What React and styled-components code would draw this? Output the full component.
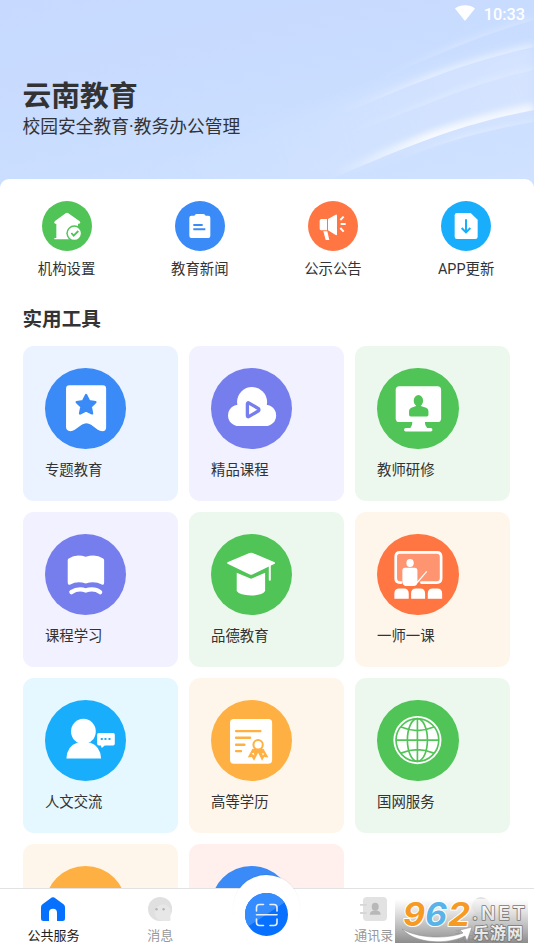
import React from 'react'
import styled, { createGlobalStyle } from 'styled-components'

const BLUE = '#3a8af8'
const PURPLE = '#767eee'
const GREEN = '#50c456'
const ORANGE = '#ff7643'
const SKY = '#19aefb'
const AMBER = '#ffb043'

const quickLinks = [
  { text: '机构设置', color: GREEN, icon: <HouseIcon /> },
  { text: '教育新闻', color: BLUE, icon: <ClipboardIcon /> },
  { text: '公示公告', color: ORANGE, icon: <MegaphoneIcon /> },
  { text: 'APP更新', color: SKY, icon: <DownloadIcon /> },
]

const tools = [
  { text: '专题教育', color: BLUE, bg: '#eaf3ff', icon: <BookmarkIcon /> },
  { text: '精品课程', color: PURPLE, bg: '#f1f1ff', icon: <CloudIcon /> },
  { text: '教师研修', color: GREEN, bg: '#ecf8ee', icon: <MonitorIcon /> },
  { text: '课程学习', color: PURPLE, bg: '#f1f1ff', icon: <BookIcon /> },
  { text: '品德教育', color: GREEN, bg: '#ecf8ee', icon: <CapIcon /> },
  { text: '一师一课', color: ORANGE, bg: '#fff6eb', icon: <TeacherIcon /> },
  { text: '人文交流', color: SKY, bg: '#e5f7ff', icon: <PersonIcon /> },
  { text: '高等学历', color: AMBER, bg: '#fff6eb', icon: <DiplomaIcon /> },
  { text: '国网服务', color: GREEN, bg: '#ecf8ee', icon: <GlobeIcon /> },
  { text: '', color: AMBER, bg: '#fff6eb' },
  { text: '', color: BLUE, bg: '#fff0ed' },
]

const streaks = [
  { id: 's1', d: 'M320 183C380 160 440 128 534 110', width: 22, opacity: 0.85, from: 330 },
  { id: 's2', d: 'M380 167C430 146 480 131 534 122', width: 8, opacity: 0.45, from: 400 },
  { id: 's3', d: 'M300 132C400 90 450 66 534 47', width: 10, opacity: 0.55, from: 340 },
  { id: 's4', d: 'M350 134C420 108 470 84 534 70', width: 10, opacity: 0.3, from: 350 },
  { id: 's5', d: 'M370 86C430 56 480 36 534 20', width: 10, opacity: 0.28, from: 380 },
]

function App() {
  return (
    <Screen>
      <GlobalStyle />
      <Header>
        <HeaderWaves />
        <StatusBar>
          <svg width="20" height="16" viewBox="0 0 20 16">
            <path d="M0 3.6C5.6-.8 14.4-.8 20 3.6L10.6 15.200Q10 15.900 9.400 15.200Z" fill="#fff" />
          </svg>
          <Clock>10:33</Clock>
        </StatusBar>
        <Title>云南教育</Title>
        <Subtitle>校园安全教育·教务办公管理</Subtitle>
      </Header>
      <Panel>
        <QuickRow>
          {quickLinks.map(item => (
            <QuickItem key={item.text}>
              <Round $size={50} $color={item.color}>{item.icon}</Round>
              <QuickText>{item.text}</QuickText>
            </QuickItem>
          ))}
        </QuickRow>
        <SectionTitle>实用工具</SectionTitle>
        <ToolGrid>
          {tools.map((item, i) => (
            <ToolCard key={i} $bg={item.bg}>
              <Round $size={81.5} $color={item.color}>{item.icon}</Round>
              <ToolText>{item.text}</ToolText>
            </ToolCard>
          ))}
        </ToolGrid>
      </Panel>
      <TabBar>
        <Tab $active>
          <svg width="24" height="24" viewBox="0 0 24 24">
            <path d="M1.500 7.300 10.700.6q1.300-.9 2.600 0l9.200 6.700Q24 8.500 24 10.300V21.500Q24 24 21.500 24H16V15.800a4 4 0 0 0-8 0V24H2.500Q0 24 0 21.500V10.300Q0 8.500 1.500 7.300Z" fill="#0670ff" />
          </svg>
          公共服务
        </Tab>
        <Tab>
          <svg width="24" height="24" viewBox="0 0 24 24">
            <path d="M12 0a12 12 0 0 1 9.700 19.200l.3 3.600q.1 1.200-1.200 1.200H12A12 12 0 0 1 12 0Z" fill="#e0e0e0" />
            <path d="M15 7.500a8 8 0 0 1 7.300 11l.2 4.500q0 1-1.200 1H15a8 8 0 0 1 0-16.500Z" fill="#e7e7e7" />
            <circle cx="8.500" cy="12.300" r="1.200" fill="#b5b5b5" />
            <circle cx="15.600" cy="12.300" r="1.200" fill="#b5b5b5" />
          </svg>
          消息
        </Tab>
        <ScanTab>
          <ScanBump />
          <ScanButton>
            <svg width="43" height="43" viewBox="0 0 43 43">
              <circle cx="21.500" cy="21.500" r="21.500" fill="#0870ff" />
              <path d="M39.500 9.500A21.500 21.500 0 1 0 3.500 33.300Z" fill="#358cff" />
              <path
                d="M11.500 18V14.500Q11.500 11.500 14.500 11.500H18.500M25 11.500H29Q32 11.500 32 14.500V18M11.500 26V29.500Q11.500 32.500 14.500 32.500H18.500M25 32.500H29Q32 32.500 32 29.500V26M11.500 21.800H32"
                fill="none"
                stroke="#e5f1ff"
                strokeWidth="1.600"
                strokeLinecap="round"
              />
            </svg>
          </ScanButton>
        </ScanTab>
        <Tab>
          <svg width="28" height="24" viewBox="0 0 28 24">
            <rect x="3" width="24" height="24" rx="4" fill="#e2e2e2" />
            <path d="M.5 7.800h5.500M.5 16h5.500" stroke="#d6d6d6" strokeWidth="1.800" strokeLinecap="round" />
            <ellipse cx="15.200" cy="9.800" rx="3.500" ry="4" fill="#b8b8b8" />
            <path d="M9.800 17.800c0-3 2-4.200 5.400-4.200s5.400 1.200 5.400 4.200Z" fill="#b8b8b8" />
          </svg>
          通讯录
        </Tab>
        <Tab>
          <svg width="24" height="24" viewBox="0 0 24 24">
            <circle cx="12" cy="9" r="9" fill="#e2e2e2" />
            <path d="M2 24q0-9 10-9t10 9Z" fill="#d6d6d6" />
          </svg>
          我的服务
        </Tab>
      </TabBar>
      <Watermark />
    </Screen>
  )
}

export default App

/* every streak is a blurred stroke cut off sharply along its lower edge */
function HeaderWaves() {
  return (
    <Waves viewBox="0 0 534 190" preserveAspectRatio="none">
      <defs>
        <linearGradient id="pale" x1="150" y1="170" x2="534" y2="60" gradientUnits="userSpaceOnUse">
          <stop offset="0" stopColor="#d4e6ff" stopOpacity="0" />
          <stop offset="1" stopColor="#dae6ff" stopOpacity=".7" />
        </linearGradient>
        <filter id="softer" x="-10%" y="-20%" width="120%" height="140%"><feGaussianBlur stdDeviation="6" /></filter>
        <filter id="soft" x="-10%" y="-30%" width="120%" height="160%"><feGaussianBlur stdDeviation="3" /></filter>
        <filter id="edge" x="-10%" y="-30%" width="120%" height="160%"><feGaussianBlur stdDeviation=".6" /></filter>
        {streaks.map(s => (
          <React.Fragment key={s.id}>
            <linearGradient id={s.id + 'g'} x1={s.from} y1="0" x2="534" y2="0" gradientUnits="userSpaceOnUse">
              <stop offset="0" stopColor="#fff" stopOpacity="0" />
              <stop offset=".48" stopColor="#fff" stopOpacity={s.opacity} />
              <stop offset="1" stopColor="#fff" stopOpacity={s.opacity * 0.8} />
            </linearGradient>
            <clipPath id={s.id + 'c'}><path d={s.d + 'V-20H200V190Z'} /></clipPath>
          </React.Fragment>
        ))}
      </defs>
      <path d="M120 178C260 145 370 70 534 45V115C450 130 400 160 320 180Z" fill="url(#pale)" filter="url(#softer)" />
      {streaks.map(s => (
        <g key={s.id} filter="url(#edge)">
          <g clipPath={`url(#${s.id}c)`}>
            <path d={s.d} fill="none" stroke={`url(#${s.id}g)`} strokeWidth={s.width * 0.6} filter="url(#soft)" />
          </g>
        </g>
      ))}
    </Waves>
  )
}

/* small icons, 150 unit box */

function HouseIcon() {
  return (
    <svg viewBox="0 0 150 150" fill="#fff">
      <path d="M71 37q4-3 8 0l33 23q6 5 0 8h-4v47H37v-4h6V68h-4q-5-3 0-8Z" />
      <circle cx="97" cy="97" r="24" fill={GREEN} />
      <circle cx="97" cy="97" r="19.500" />
      <path d="m88 96 7 8 14-14" fill="none" stroke={GREEN} strokeWidth="5.500" />
    </svg>
  )
}

function ClipboardIcon() {
  return (
    <svg viewBox="0 0 150 150" fill="#fff">
      <path d="M49 44h9q2-5 7-5h20q5 0 7 5h8q6 0 6 6v55q0 6-6 6H49q-6 0-6-6V50q0-6 6-6Z" />
      <path d="M55 72h28M55 84.500h36" stroke={BLUE} strokeWidth="6" />
    </svg>
  )
}

function MegaphoneIcon() {
  return (
    <svg viewBox="0 0 150 150" fill="#fff">
      <path d="M40 54h17v34H40q-5 0-5-5V59q0-5 5-5ZM60 54l23-13q4-2 4 3v56q0 4-4 2L60 88ZM46 91h12l6 26H53Z" />
      <path d="m97 57 10-10M98 69h15M97 81l10 11" stroke="#fff" strokeWidth="6" />
    </svg>
  )
}

function DownloadIcon() {
  return (
    <svg viewBox="0 0 150 150" fill="#fff">
      <path d="M48 36h41l21 20v51q0 7-7 7H48q-7 0-7-7V43q0-7 7-7Z" />
      <path d="M75 55v38M62 81l13 13 13-13" fill="none" stroke={SKY} strokeWidth="6" />
    </svg>
  )
}

/* card icons, 244 unit box */

function BookmarkIcon() {
  return (
    <svg viewBox="0 0 244 244" fill="#fff">
      <path d="M73 52h100q10 0 10 10v116q0 11-11 11-8 0-14-4l-20-15q-14-9-28 0l-21 15q-6 4-13 4-13 0-13-12V62q0-10 10-10Z" />
      <path d="m123 81 9 18 19 3-14 14 4 20-18-9-18 9 4-20-14-14 19-3Z" fill={BLUE} stroke={BLUE} strokeWidth="7" strokeLinejoin="round" />
    </svg>
  )
}

function CloudIcon() {
  return (
    <svg viewBox="0 0 244 244" fill="#fff">
      <circle cx="123" cy="102" r="45" />
      <path d="M83 110h80a32 32 0 0 1 0 64H83a32 32 0 0 1 0-64Z" />
      <path d="M109 108v34q0 6 5 3l27-16q5-4 0-8l-27-16q-5-3-5 3Z" fill="none" stroke={PURPLE} strokeWidth="10" strokeLinejoin="round" />
    </svg>
  )
}

function MonitorIcon() {
  return (
    <svg viewBox="0 0 244 244" fill="#fff">
      <rect x="56" y="55" width="136" height="107" rx="11" />
      <path d="M106 160h37q0 11 7 20h11q5 0 5 5t-5 5H86q-5 0-5-5t5-5h14q6-9 6-20Z" />
      <ellipse cx="124" cy="98" rx="14" ry="17" fill={GREEN} />
      <path d="M117 108h14v6l16 5q7 3 7 10v11q0 5-5 5h-48q-5 0-5-5v-11q0-7 7-10l14-5Z" fill={GREEN} />
    </svg>
  )
}

function BookIcon() {
  return (
    <svg viewBox="0 0 244 244" fill="#fff">
      <path d="M68 79q0-4 3-6 22-15 51-5 30-10 52 5 3 2 3 6v67q0 8-7 5-21-11-48-3-26-8-46 3-8 3-8-5Z" />
      <path d="M79 174q20-13 43-5 26-8 43 5" fill="none" stroke="#fff" strokeWidth="13" strokeLinecap="round" />
    </svg>
  )
}

function CapIcon() {
  return (
    <svg viewBox="0 0 244 244" fill="#fff">
      <path d="M115 57q5-2 10 0l64 27q6 3 0 6l-65 31q-4 2-8 0L51 90q-6-3 0-6Z" />
      <path d="m77 116 43 18 42-18v55q-8 13-42 13t-43-13Z" />
      <path d="M176 91v46" stroke="#fff" strokeWidth="6" strokeLinecap="round" />
    </svg>
  )
}

function TeacherIcon() {
  return (
    <svg viewBox="0 0 244 244" fill="#fff">
      <rect x="56" y="55" width="136" height="90" rx="13" fill="#ff9471" />
      <path d="M72 145.500h-3q-13 0-13-13V68q0-13 13-13h110q13 0 13 13v64.500q0 13-13 13h-46" fill="none" stroke="#fff" strokeWidth="8" strokeLinecap="round" />
      <path d="m118 148 31-36" stroke="#fff" strokeWidth="4" />
      <ellipse cx="99" cy="87" rx="11" ry="12" />
      <path d="M84 101h29q8 0 8 8v35q0 12-12 12H92q-16 0-16-14v-33q0-8 8-8Z" />
      <path d="M52 194v-16q0-15 15-15h13q15 0 15 15v16ZM102 194v-16q0-15 15-15h12q15 0 15 15v16ZM152 194v-16q0-15 15-15h13q15 0 15 15v16Z" />
    </svg>
  )
}

function PersonIcon() {
  return (
    <svg viewBox="0 0 244 244" fill="#fff">
      <ellipse cx="115" cy="94" rx="37" ry="38" />
      <path d="M64 175q2-37 32-47h40q30 10 32 47Z" />
      <path d="M161 99h43q5 0 5 5v26q0 6-5 6h-25l-9 8-3-8h-6q-5 0-5-6v-26q0-5 5-5Z" />
      <path d="M167 114h6v6h-6ZM178 114h6v6h-6ZM190 114h6v6h-6Z" fill={SKY} />
    </svg>
  )
}

function DiplomaIcon() {
  return (
    <svg viewBox="0 0 244 244" fill="#fff">
      <rect x="57" y="57" width="126" height="134" rx="11" />
      <path d="M75 93h73M75 113h42M75 134h25M75 153h15" stroke={AMBER} strokeWidth="7" strokeLinecap="round" />
      <path d="m124 146-14 26 12-1 7 11 12-24 12 24 6-11 13 1-15-26Z" fill={AMBER} />
      <circle cx="141" cy="134" r="14" stroke={AMBER} strokeWidth="6" />
      <path d="m121 160 7-2 2 8ZM153 159l7 2-5 5Z" />
    </svg>
  )
}

function GlobeIcon() {
  return (
    <svg viewBox="0 0 244 244" fill="#fff">
      <circle cx="121" cy="120" r="72" />
      <g fill="none" stroke={GREEN} strokeWidth="5">
        <circle cx="121" cy="120" r="64" />
        <ellipse cx="121" cy="120" rx="30" ry="64" />
        <path d="M121 56v128M57 120h128M72 81q49 21 98 0M72 159q49-21 98 0" />
      </g>
    </svg>
  )
}

function Watermark() {
  return (
    <Mark width="133" height="44" viewBox="0 0 133 44">
      <defs>
        <linearGradient id="plate" x1="0" y1="0" x2="0" y2="1">
          <stop offset="0" stopColor="#fff" stopOpacity=".7" />
          <stop offset=".5" stopColor="#c0c0c0" stopOpacity=".82" />
          <stop offset="1" stopColor="#828282" stopOpacity=".92" />
        </linearGradient>
        <linearGradient id="silver" x1="0" y1="0" x2="0" y2="1">
          <stop offset="0" stopColor="#fff" />
          <stop offset="1" stopColor="#d8d8d8" />
        </linearGradient>
      </defs>
      <rect width="133" height="44" fill="url(#plate)" />
      <path d="M7 30C25 40 52 40 68 34L65 31 77 28 72 42 70 37C52 46 21 45 7 30Z" fill="#fff" stroke="#8b8b8b" strokeWidth=".5" />
      <g fontFamily="Inter, sans-serif" fontWeight="700" fontStyle="italic" fontSize="32" stroke="#fff" strokeWidth="2" paintOrder="stroke" strokeLinejoin="round">
        <text x="8" y="26.500" textLength="22" lengthAdjust="spacingAndGlyphs" fill="#f69a24">9</text>
        <text x="30" y="26.500" textLength="22" lengthAdjust="spacingAndGlyphs" fill="#58b3e8">6</text>
        <text x="53" y="26.500" textLength="22" lengthAdjust="spacingAndGlyphs" fill="#f69a24">2</text>
      </g>
      <g fill="url(#silver)" stroke="#777" strokeWidth="1.600" paintOrder="stroke" strokeLinejoin="round">
        <text x="77" y="21" fontFamily="Inter, sans-serif" fontWeight="600" fontSize="19" textLength="53" lengthAdjust="spacing">.NET</text>
        <text x="78" y="39.500" fontFamily="'Noto Sans CJK SC', sans-serif" fontWeight="700" fontSize="16" textLength="50" lengthAdjust="spacing">乐游网</text>
      </g>
    </Mark>
  )
}

const GlobalStyle = createGlobalStyle`
  * {
    box-sizing: border-box;
  }
  body {
    margin: 0;
    background: #fff;
    color: #333;
    font-family: Roboto, 'Noto Sans CJK SC', sans-serif;
  }
`

const Screen = styled.div`
  position: relative;
  display: flex;
  flex-direction: column;
  width: 534px;
  height: 949px;
  overflow: hidden;
`

const Header = styled.header`
  position: relative;
  flex: none;
  height: 190px;
  padding: 0 9px 0 22.500px;
  background: linear-gradient(168deg, #c7d9ff 0%, #c9ddff 50%, #d0e2ff 100%);
`

const Waves = styled.svg`
  position: absolute;
  inset: 0;
  width: 100%;
  height: 100%;
`

const StatusBar = styled.div`
  position: relative;
  display: flex;
  justify-content: flex-end;
  align-items: center;
  gap: 9px;
  height: 28px;
  svg {
    margin-bottom: 2px;
  }
`

const Clock = styled.span`
  margin-top: 2px;
  color: #fff;
  font-size: 16.300px;
  font-weight: 500;
  line-height: 20px;
`

const Title = styled.h1`
  position: relative;
  margin: 49px 0 0;
  font-size: 28.800px;
  font-weight: 700;
  line-height: 38px;
`

const Subtitle = styled.div`
  position: relative;
  font-size: 17.750px;
  line-height: 24px;
`

const Panel = styled.main`
  position: relative;
  flex: 1;
  min-height: 0;
  margin-top: -11.500px;
  padding-top: 22px;
  overflow: hidden;
  background: #fff;
  border-radius: 9px 9px 0 0;
`

const QuickRow = styled.div`
  display: grid;
  grid-template-columns: repeat(4, 133.200px);
`

const QuickItem = styled.div`
  display: flex;
  flex-direction: column;
  align-items: center;
`

const Round = styled.div`
  width: ${props => props.$size}px;
  height: ${props => props.$size}px;
  border-radius: 50%;
  background: ${props => props.$color};
  svg {
    display: block;
    width: 100%;
    height: 100%;
  }
`

const QuickText = styled.div`
  margin-top: 8px;
  font-size: 14.400px;
  line-height: 22px;
`

const SectionTitle = styled.h2`
  margin: 25px 0 12px 22.500px;
  font-size: 19.600px;
  font-weight: 700;
  line-height: 28px;
  height: 28px;
`

const ToolGrid = styled.div`
  display: grid;
  grid-template-columns: repeat(3, 155.500px);
  grid-auto-rows: 155.500px;
  gap: 10.600px;
  padding-left: 22.500px;
`

const ToolCard = styled.div`
  padding: 22px 22.400px;
  border-radius: 11px;
  background: ${props => props.$bg};
`

const ToolText = styled.div`
  margin-top: 10.500px;
  font-size: 14.400px;
  line-height: 22px;
`

const TabBar = styled.nav`
  position: relative;
  flex: none;
  display: grid;
  grid-template-columns: repeat(5, 1fr);
  height: 61px;
  border-top: 1px solid #e2e2e2;
  background: #fff;
`

const Tab = styled.div`
  display: flex;
  flex-direction: column;
  align-items: center;
  gap: 5px;
  padding-top: 8px;
  color: ${props => (props.$active ? '#222' : '#999')};
  font-size: 13px;
  line-height: 20px;
`

const ScanTab = styled.div`
  position: relative;
  display: flex;
  justify-content: center;
  padding-top: 4px;
`

/* white half circle that lifts the scan button above the bar */
const ScanBump = styled.div`
  position: absolute;
  top: -14px;
  left: 50%;
  width: 67px;
  height: 67px;
  margin-left: -33.500px;
  border-radius: 50%;
  background: #fff;
  box-shadow: 0 -1px 1px rgba(0, 0, 0, 0.05);
`

const ScanButton = styled.div`
  position: relative;
  height: 43px;
`

const Mark = styled.svg`
  position: absolute;
  left: 395px;
  top: 899px;
  overflow: visible;
`
